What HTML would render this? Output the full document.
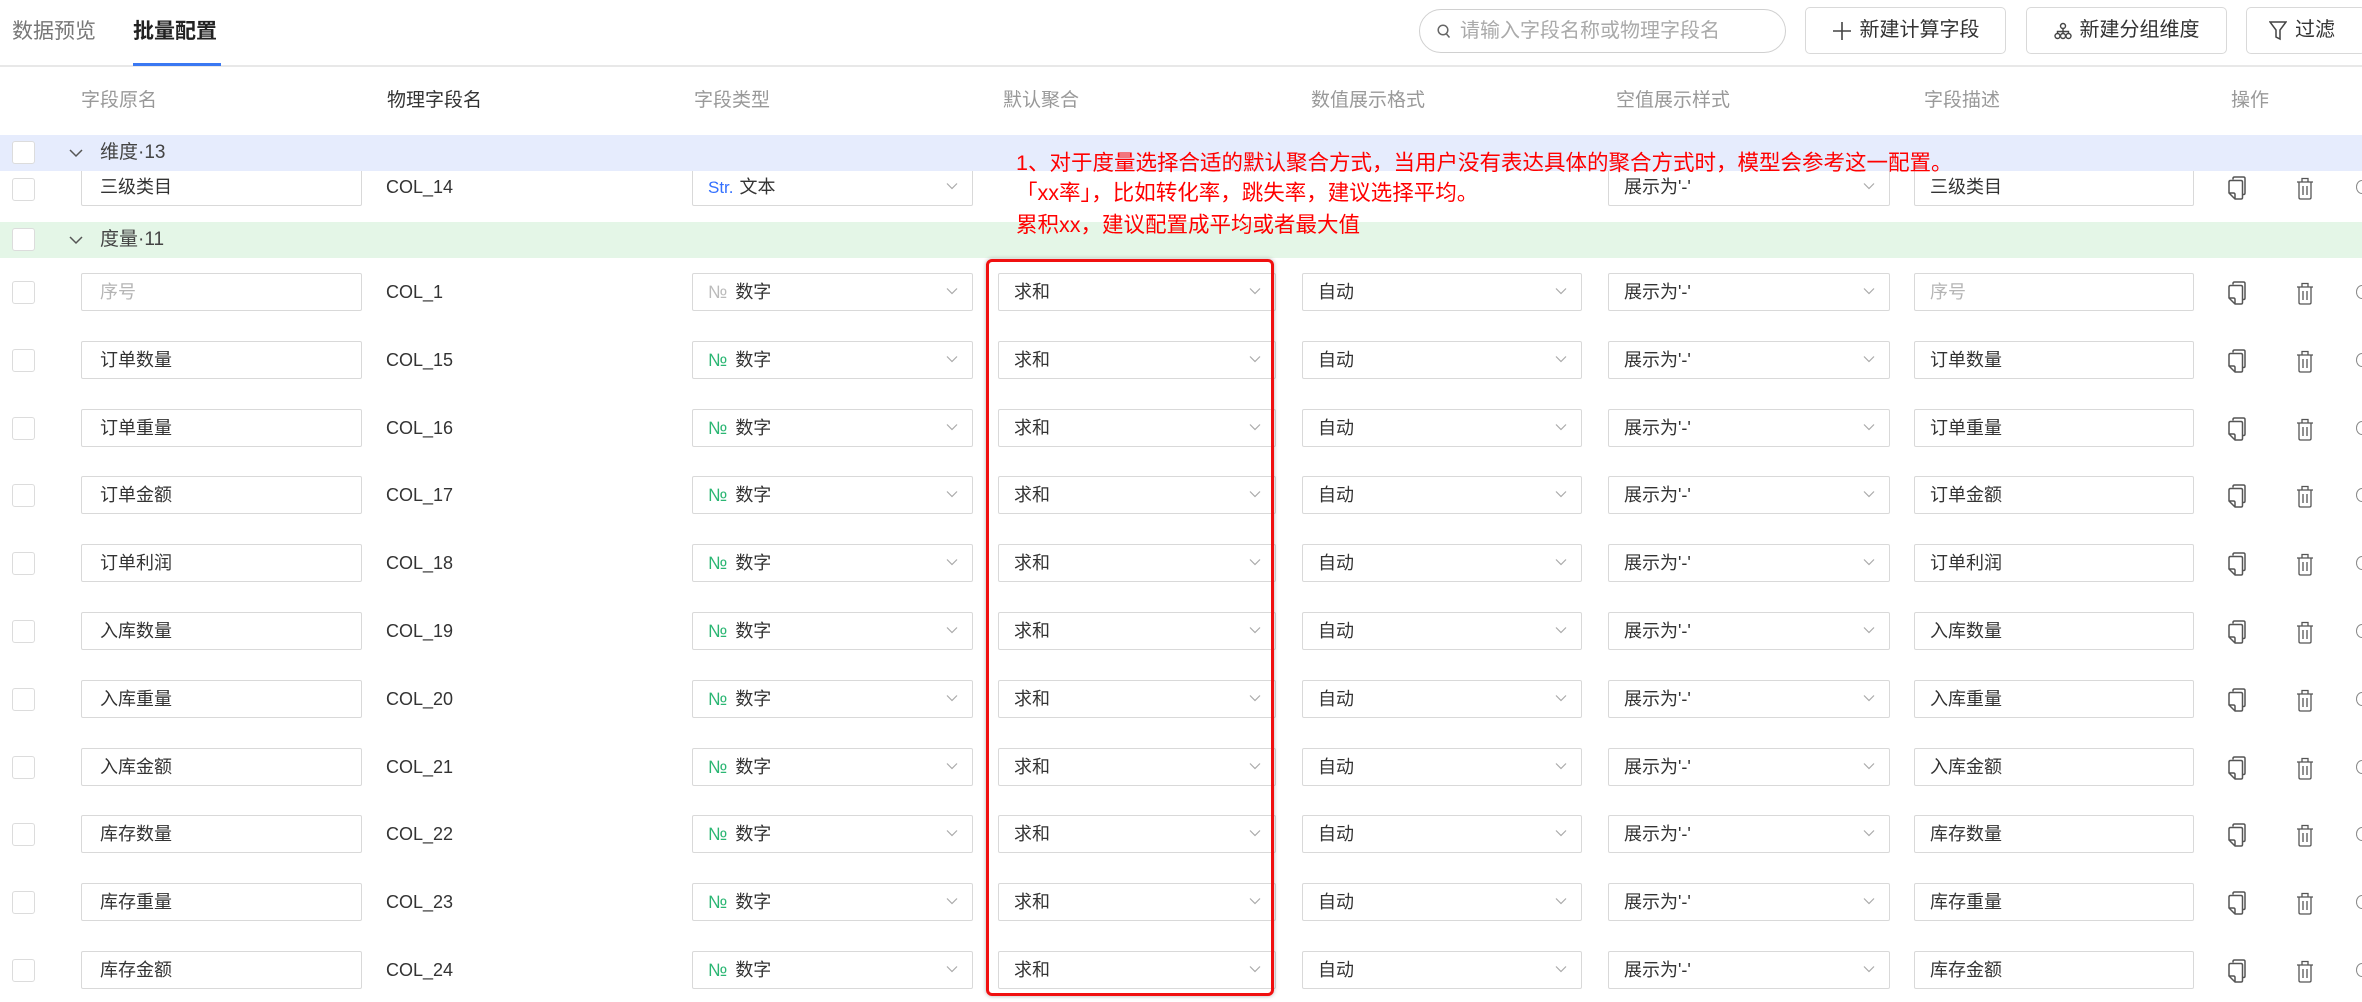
<!DOCTYPE html>
<html><head><meta charset="utf-8"><style>
*{box-sizing:border-box;margin:0;padding:0}
body{width:2362px;height:1002px;overflow:hidden;background:#fff;position:relative;font-family:"Liberation Sans","Noto Sans CJK SC",sans-serif;color:#333}
.a{position:absolute}
.tab{position:absolute;top:14px;font-size:21px;line-height:36px}
.btn{position:absolute;top:7px;height:47px;border:1px solid #d9d9d9;border-radius:5px;font-size:20px;line-height:45px;color:#333;display:flex;align-items:center;justify-content:center;gap:8px;background:#fff}
.th{position:absolute;top:88px;font-size:19px;line-height:26px;color:#999}
.grp{position:absolute;left:0;width:2362px;height:36px;z-index:2}
.grp .cb{top:6px}
.grp .t{position:absolute;left:100px;top:0;line-height:36px;font-size:19px;color:#444}
.grp .chev{position:absolute;left:68px;top:8px}
.cb{position:absolute;left:12px;width:23px;height:23px;border:1px solid #dcdcdc;border-radius:3px;background:#fff}
.r{position:absolute;left:0;width:2362px;height:38px}
.r .cb{top:8px}
.box{position:absolute;top:0;height:38px;border:1px solid #d9d9d9;border-radius:2px;background:#fff;font-size:18px;line-height:36px;padding-left:15px;color:#333;white-space:nowrap}
.box svg.dd{position:absolute;right:14px;top:13px}
.i1{left:81px;width:281px;padding-left:18px}
.col{position:absolute;left:386px;top:0;line-height:38px;font-size:18px}
.ty{left:692px;width:281px}
.ag{left:998px;width:278px}
.fm{left:1302px;width:280px}
.nu{left:1608px;width:282px}
.de{left:1914px;width:280px}
.ph{color:#b5b5b5}
.no{color:#2bb673;margin-right:8px}
.ic{position:absolute;top:8px}
.ed{position:absolute;left:2356px;top:12px;width:12px;height:14px;border:1.5px solid #888;border-radius:50%}
.note{position:absolute;left:1016px;color:#ff0000;font-size:21.5px;line-height:30px;z-index:5;white-space:nowrap}
</style></head><body>
<svg width="0" height="0" style="position:absolute"><defs>
<symbol id="dd" viewBox="0 0 12 8"><path d="M1 1.5 6 6.5 11 1.5" fill="none" stroke="#aaa" stroke-width="1.2"/></symbol>
<symbol id="cp" viewBox="0 0 20 24"><path d="M6 3.5V2.5Q6 1 7.5 1H16.5Q18 1 18 2.5V17Q18 18.5 16.5 18.5H15.5" fill="none" stroke="#555" stroke-width="1.5"/><path d="M3.5 4.5H14Q15.5 4.5 15.5 6V21.5Q15.5 23 14 23H8L2 17V6Q2 4.5 3.5 4.5Z M2 17H6.5Q8 17 8 18.5V23" fill="none" stroke="#555" stroke-width="1.5" stroke-linejoin="round"/></symbol>
<symbol id="tr" viewBox="0 0 20 24"><path d="M2 6H18 M7 6V2.5H13V6 M4 6V21.5Q4 23 5.5 23H14.5Q16 23 16 21.5V6 M8 10V19 M12 10V19" fill="none" stroke="#555" stroke-width="1.3"/></symbol>
</defs></svg>

<div class="tab" style="left:12px;color:#777">数据预览</div>
<div class="tab" style="left:133px;color:#222;font-weight:bold">批量配置</div>
<div class="a" style="left:0;top:65px;width:2362px;height:2px;background:#e8e8e8"></div>
<div class="a" style="left:133px;top:63px;width:88px;height:3px;background:#3a78f2"></div>

<div class="a" style="left:1419px;top:9px;width:367px;height:44px;border:1px solid #d0d0d0;border-radius:22px;font-size:20px;line-height:42px;color:#aaa;padding-left:40px">
<svg class="a" style="left:17px;top:14px" width="14" height="15" viewBox="0 0 14 15"><circle cx="6" cy="6" r="4.8" fill="none" stroke="#666" stroke-width="1.5"/><path d="M9.5 10 12.5 13.5" stroke="#666" stroke-width="1.5"/></svg>请输入字段名称或物理字段名</div>
<div class="btn" style="left:1805px;width:201px"><svg width="20" height="20" viewBox="0 0 20 20"><path d="M10 1V19M1 10H19" stroke="#444" stroke-width="1.6"/></svg>新建计算字段</div>
<div class="btn" style="left:2026px;width:201px"><svg width="18" height="18" viewBox="0 0 18 18" fill="none" stroke="#444" stroke-width="1.4"><circle cx="9" cy="4" r="2.5"/><circle cx="3.5" cy="14" r="2.5"/><circle cx="9" cy="14" r="2.5"/><circle cx="14.5" cy="14" r="2.5"/><path d="M9 6.5V11.5M3.5 11.5V9.5H14.5V11.5"/></svg>新建分组维度</div>
<div class="btn" style="left:2246px;width:120px;justify-content:flex-start;padding-left:22px"><svg width="18" height="20" viewBox="0 0 18 20" fill="none" stroke="#444" stroke-width="1.5"><path d="M1 1H17L11 9V18L7 16V9Z"/></svg>过滤</div>

<div class="th" style="left:81px">字段原名</div>
<div class="th" style="left:387px;color:#333">物理字段名</div>
<div class="th" style="left:694px">字段类型</div>
<div class="th" style="left:1003px">默认聚合</div>
<div class="th" style="left:1311px">数值展示格式</div>
<div class="th" style="left:1616px">空值展示样式</div>
<div class="th" style="left:1924px">字段描述</div>
<div class="th" style="left:2231px">操作</div>

<div class="grp" style="top:135px;background:#e6ecfd"><div class="cb"></div><svg class="chev" width="16" height="20" viewBox="0 0 16 20"><path d="M2 7 8 13 14 7" fill="none" stroke="#555" stroke-width="1.5"/></svg><div class="t">维度·13</div></div>

<div class="r" style="top:168px"><div class="cb" style="top:10px"></div>
<div class="box i1">三级类目</div><div class="col">COL_14</div>
<div class="box ty"><span style="color:#3370ff;margin-right:6px;font-size:17px">Str.</span>文本<svg class="dd" width="12" height="8"><use href="#dd"/></svg></div>
<div class="box nu">展示为'-'<svg class="dd" width="12" height="8"><use href="#dd"/></svg></div>
<div class="box de">三级类目</div>
<svg class="ic" style="left:2227px" width="20" height="24"><use href="#cp"/></svg>
<svg class="ic" style="left:2295px" width="20" height="24"><use href="#tr"/></svg><div class="ed"></div>
</div>

<div class="grp" style="top:222px;background:#e4f6e7"><div class="cb"></div><svg class="chev" width="16" height="20" viewBox="0 0 16 20"><path d="M2 7 8 13 14 7" fill="none" stroke="#555" stroke-width="1.5"/></svg><div class="t">度量·11</div></div>

<div class="note" style="top:148px">1、对于度量选择合适的默认聚合方式，当用户没有表达具体的聚合方式时，模型会参考这一配置。</div>
<div class="note" style="top:178px">「xx率」，比如转化率，跳失率，建议选择平均。</div>
<div class="note" style="top:210px">累积xx，建议配置成平均或者最大值</div>

<div class="a" style="left:986px;top:259px;width:288px;height:737px;border:3.5px solid #f01010;border-radius:6px;z-index:4;box-shadow:0 0 4px rgba(0,0,0,.3)"></div>

<div class="r" style="top:273px"><div class="cb"></div><div class="box i1 ph">序号</div><div class="col">COL_1</div><div class="box ty"><span class="no" style="color:#bbb">№</span>数字<svg class="dd" width="12" height="8"><use href="#dd"/></svg></div><div class="box ag">求和<svg class="dd" width="12" height="8"><use href="#dd"/></svg></div><div class="box fm">自动<svg class="dd" width="12" height="8"><use href="#dd"/></svg></div><div class="box nu">展示为'-'<svg class="dd" width="12" height="8"><use href="#dd"/></svg></div><div class="box de ph">序号</div><svg class="ic" style="left:2227px" width="20" height="24"><use href="#cp"/></svg><svg class="ic" style="left:2295px" width="20" height="24"><use href="#tr"/></svg><div class="ed"></div></div>

<div class="r" style="top:341px"><div class="cb"></div><div class="box i1">订单数量</div><div class="col">COL_15</div><div class="box ty"><span class="no">№</span>数字<svg class="dd" width="12" height="8"><use href="#dd"/></svg></div><div class="box ag">求和<svg class="dd" width="12" height="8"><use href="#dd"/></svg></div><div class="box fm">自动<svg class="dd" width="12" height="8"><use href="#dd"/></svg></div><div class="box nu">展示为'-'<svg class="dd" width="12" height="8"><use href="#dd"/></svg></div><div class="box de">订单数量</div><svg class="ic" style="left:2227px" width="20" height="24"><use href="#cp"/></svg><svg class="ic" style="left:2295px" width="20" height="24"><use href="#tr"/></svg><div class="ed"></div></div>

<div class="r" style="top:409px"><div class="cb"></div><div class="box i1">订单重量</div><div class="col">COL_16</div><div class="box ty"><span class="no">№</span>数字<svg class="dd" width="12" height="8"><use href="#dd"/></svg></div><div class="box ag">求和<svg class="dd" width="12" height="8"><use href="#dd"/></svg></div><div class="box fm">自动<svg class="dd" width="12" height="8"><use href="#dd"/></svg></div><div class="box nu">展示为'-'<svg class="dd" width="12" height="8"><use href="#dd"/></svg></div><div class="box de">订单重量</div><svg class="ic" style="left:2227px" width="20" height="24"><use href="#cp"/></svg><svg class="ic" style="left:2295px" width="20" height="24"><use href="#tr"/></svg><div class="ed"></div></div>

<div class="r" style="top:476px"><div class="cb"></div><div class="box i1">订单金额</div><div class="col">COL_17</div><div class="box ty"><span class="no">№</span>数字<svg class="dd" width="12" height="8"><use href="#dd"/></svg></div><div class="box ag">求和<svg class="dd" width="12" height="8"><use href="#dd"/></svg></div><div class="box fm">自动<svg class="dd" width="12" height="8"><use href="#dd"/></svg></div><div class="box nu">展示为'-'<svg class="dd" width="12" height="8"><use href="#dd"/></svg></div><div class="box de">订单金额</div><svg class="ic" style="left:2227px" width="20" height="24"><use href="#cp"/></svg><svg class="ic" style="left:2295px" width="20" height="24"><use href="#tr"/></svg><div class="ed"></div></div>

<div class="r" style="top:544px"><div class="cb"></div><div class="box i1">订单利润</div><div class="col">COL_18</div><div class="box ty"><span class="no">№</span>数字<svg class="dd" width="12" height="8"><use href="#dd"/></svg></div><div class="box ag">求和<svg class="dd" width="12" height="8"><use href="#dd"/></svg></div><div class="box fm">自动<svg class="dd" width="12" height="8"><use href="#dd"/></svg></div><div class="box nu">展示为'-'<svg class="dd" width="12" height="8"><use href="#dd"/></svg></div><div class="box de">订单利润</div><svg class="ic" style="left:2227px" width="20" height="24"><use href="#cp"/></svg><svg class="ic" style="left:2295px" width="20" height="24"><use href="#tr"/></svg><div class="ed"></div></div>

<div class="r" style="top:612px"><div class="cb"></div><div class="box i1">入库数量</div><div class="col">COL_19</div><div class="box ty"><span class="no">№</span>数字<svg class="dd" width="12" height="8"><use href="#dd"/></svg></div><div class="box ag">求和<svg class="dd" width="12" height="8"><use href="#dd"/></svg></div><div class="box fm">自动<svg class="dd" width="12" height="8"><use href="#dd"/></svg></div><div class="box nu">展示为'-'<svg class="dd" width="12" height="8"><use href="#dd"/></svg></div><div class="box de">入库数量</div><svg class="ic" style="left:2227px" width="20" height="24"><use href="#cp"/></svg><svg class="ic" style="left:2295px" width="20" height="24"><use href="#tr"/></svg><div class="ed"></div></div>

<div class="r" style="top:680px"><div class="cb"></div><div class="box i1">入库重量</div><div class="col">COL_20</div><div class="box ty"><span class="no">№</span>数字<svg class="dd" width="12" height="8"><use href="#dd"/></svg></div><div class="box ag">求和<svg class="dd" width="12" height="8"><use href="#dd"/></svg></div><div class="box fm">自动<svg class="dd" width="12" height="8"><use href="#dd"/></svg></div><div class="box nu">展示为'-'<svg class="dd" width="12" height="8"><use href="#dd"/></svg></div><div class="box de">入库重量</div><svg class="ic" style="left:2227px" width="20" height="24"><use href="#cp"/></svg><svg class="ic" style="left:2295px" width="20" height="24"><use href="#tr"/></svg><div class="ed"></div></div>

<div class="r" style="top:748px"><div class="cb"></div><div class="box i1">入库金额</div><div class="col">COL_21</div><div class="box ty"><span class="no">№</span>数字<svg class="dd" width="12" height="8"><use href="#dd"/></svg></div><div class="box ag">求和<svg class="dd" width="12" height="8"><use href="#dd"/></svg></div><div class="box fm">自动<svg class="dd" width="12" height="8"><use href="#dd"/></svg></div><div class="box nu">展示为'-'<svg class="dd" width="12" height="8"><use href="#dd"/></svg></div><div class="box de">入库金额</div><svg class="ic" style="left:2227px" width="20" height="24"><use href="#cp"/></svg><svg class="ic" style="left:2295px" width="20" height="24"><use href="#tr"/></svg><div class="ed"></div></div>

<div class="r" style="top:815px"><div class="cb"></div><div class="box i1">库存数量</div><div class="col">COL_22</div><div class="box ty"><span class="no">№</span>数字<svg class="dd" width="12" height="8"><use href="#dd"/></svg></div><div class="box ag">求和<svg class="dd" width="12" height="8"><use href="#dd"/></svg></div><div class="box fm">自动<svg class="dd" width="12" height="8"><use href="#dd"/></svg></div><div class="box nu">展示为'-'<svg class="dd" width="12" height="8"><use href="#dd"/></svg></div><div class="box de">库存数量</div><svg class="ic" style="left:2227px" width="20" height="24"><use href="#cp"/></svg><svg class="ic" style="left:2295px" width="20" height="24"><use href="#tr"/></svg><div class="ed"></div></div>

<div class="r" style="top:883px"><div class="cb"></div><div class="box i1">库存重量</div><div class="col">COL_23</div><div class="box ty"><span class="no">№</span>数字<svg class="dd" width="12" height="8"><use href="#dd"/></svg></div><div class="box ag">求和<svg class="dd" width="12" height="8"><use href="#dd"/></svg></div><div class="box fm">自动<svg class="dd" width="12" height="8"><use href="#dd"/></svg></div><div class="box nu">展示为'-'<svg class="dd" width="12" height="8"><use href="#dd"/></svg></div><div class="box de">库存重量</div><svg class="ic" style="left:2227px" width="20" height="24"><use href="#cp"/></svg><svg class="ic" style="left:2295px" width="20" height="24"><use href="#tr"/></svg><div class="ed"></div></div>

<div class="r" style="top:951px"><div class="cb"></div><div class="box i1">库存金额</div><div class="col">COL_24</div><div class="box ty"><span class="no">№</span>数字<svg class="dd" width="12" height="8"><use href="#dd"/></svg></div><div class="box ag">求和<svg class="dd" width="12" height="8"><use href="#dd"/></svg></div><div class="box fm">自动<svg class="dd" width="12" height="8"><use href="#dd"/></svg></div><div class="box nu">展示为'-'<svg class="dd" width="12" height="8"><use href="#dd"/></svg></div><div class="box de">库存金额</div><svg class="ic" style="left:2227px" width="20" height="24"><use href="#cp"/></svg><svg class="ic" style="left:2295px" width="20" height="24"><use href="#tr"/></svg><div class="ed"></div></div>

</body></html>
